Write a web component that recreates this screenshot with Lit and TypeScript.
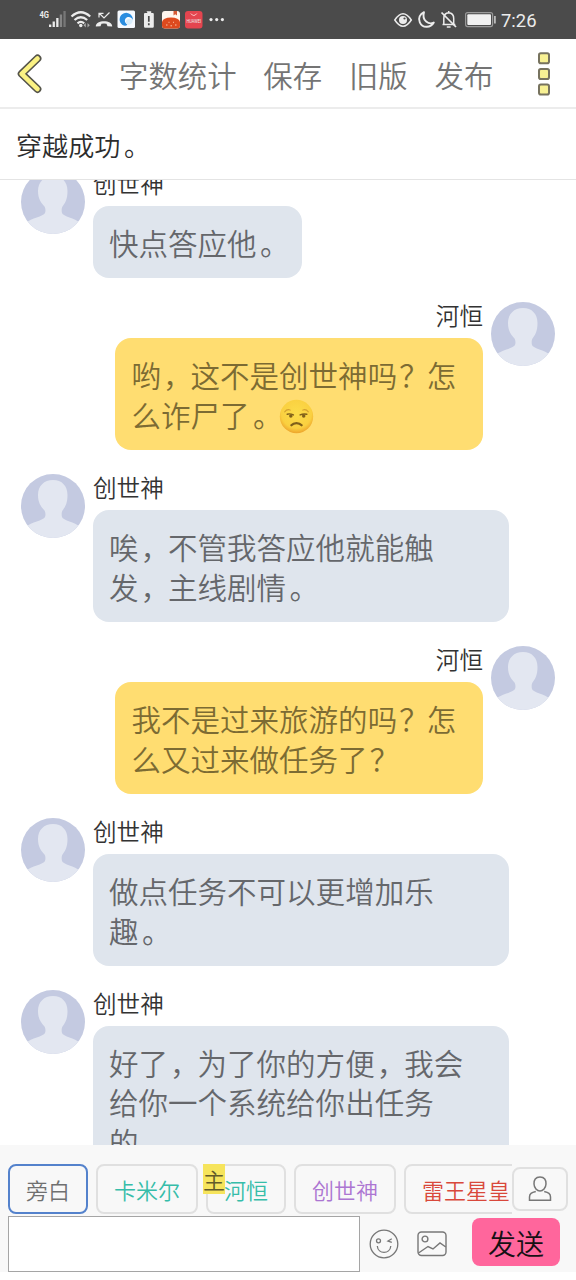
import { LitElement, html, css, svg } from "lit";
import { customElement, property } from "lit/decorators.js";

interface Message {
  name: string;
  mine: boolean;
  lines: string[];
}

interface Role {
  name: string;
  color: string;
  active?: boolean;
  lead?: boolean;
}

const MESSAGES: Message[] = [
  { name: "创世神", mine: false, lines: ["快点答应他。"] },
  { name: "河恒", mine: true, lines: ["哟，这不是创世神吗？怎", "么诈尸了。😒"] },
  { name: "创世神", mine: false, lines: ["唉，不管我答应他就能触", "发，主线剧情。"] },
  { name: "河恒", mine: true, lines: ["我不是过来旅游的吗？怎", "么又过来做任务了？"] },
  { name: "创世神", mine: false, lines: ["做点任务不可以更增加乐", "趣。"] },
  { name: "创世神", mine: false, lines: ["好了，为了你的方便，我会", "给你一个系统给你出任务", "的"] },
];

const ROLES: Role[] = [
  { name: "旁白", color: "#707070", active: true },
  { name: "卡米尔", color: "#36bda9" },
  { name: "河恒", color: "#36bda9", lead: true },
  { name: "创世神", color: "#ac76d2" },
  { name: "雷王星皇", color: "#d9483b" },
];

const unamused = html`<svg class="emoji" viewBox="0 0 34 34">
  <defs>
    <radialGradient id="face" cx=".5" cy=".4" r=".6">
      <stop offset="0" stop-color="#fcdc4a" />
      <stop offset=".75" stop-color="#fad040" />
      <stop offset="1" stop-color="#eda52c" />
    </radialGradient>
  </defs>
  <circle cx="17" cy="17" r="16.200" fill="url(#face)" />
  <g fill="none" stroke="#80601a" stroke-linecap="round">
    <path d="M5.500 12.500C7 10.500 9 9.800 11 10.800M23 10.800C25 9.800 27 10.500 28.500 12.500" stroke="#d3a030" stroke-width="1" />
    <path d="M8 14.800C9.500 14.300 12 14.500 14 15.500M20.500 15.500C22.500 14.500 25 14.300 27 14.800" stroke-width="1.400" />
    <path d="M12 25.500C14.500 22.600 19.500 22.600 22 25.500" stroke-width="2.200" />
  </g>
  <circle cx="11.500" cy="16.400" r="1.700" fill="#80601a" />
  <circle cx="24" cy="16.400" r="1.700" fill="#80601a" />
</svg>`;

function renderLine(line: string) {
  return Array.from(line).map((ch) => {
    if (ch === "😒") return unamused;
    if (ch === "。") return html`<span class="stop">${ch}</span>`;
    if (ch === "，") return html`<span class="comma">${ch}</span>`;
    if (ch === "？") return html`<span class="ask">${ch}</span>`;
    return ch;
  });
}

@customElement("status-bar")
class StatusBar extends LitElement {
  static styles = css`
    :host { display: flex; justify-content: space-between; height: 39px; background: #4b4b4b; }
    svg { display: block; height: 39px; }
    text { font-family: Roboto, sans-serif; fill: #ececec; }
  `;
  render() {
    return html`
      <svg width="240" viewBox="0 0 240 39">
        <text x="39.500" y="18" font-size="9" font-weight="700" textLength="9.500" lengthAdjust="spacingAndGlyphs">4G</text>
        <g fill="#ececec">
          <rect x="49" y="24.500" width="2.300" height="2.500" />
          <rect x="52.600" y="21.500" width="2.300" height="5.500" />
          <rect x="56.200" y="18" width="2.300" height="9" />
          <rect x="59.800" y="14.500" width="2.300" height="12.500" fill="#858585" />
          <rect x="63.400" y="11" width="2.300" height="16" fill="#777" />
        </g>
        <g fill="none" stroke="#ececec" stroke-width="2.200">
          <path d="M71.500 16.500Q80.800 8 90.200 16.500M74.500 20Q80.800 14.500 87.200 20M77.500 23.300Q80.800 20.500 84.200 23.300" />
        </g>
        <circle cx="80.800" cy="25.500" r="1.700" fill="#ececec" />
        <path d="M83.500 25.300l2.300-2.200v4.400zM89.800 25.300l-2.300-2.200v4.400z" fill="#aaa" />
        <path d="M95.800 26.500C95.500 19.500 112.500 19.500 112.200 26.500L107.500 26.300L106.500 23.800Q104 23 101.500 23.800L100.500 26.300Z" fill="#ececec" />
        <path d="M99.500 13.500l4.500 4.500L109.500 12.500M99 17.500v-4.200h4.500" fill="none" stroke="#ececec" stroke-width="1.200" />
        <rect x="117.500" y="10.500" width="17.500" height="17.500" rx="1.500" fill="#f6faff" />
        <path d="M121.500 24A6.600 6.600 0 1 1 132.800 20C131.500 16.500 127.500 16 125.800 18.300C124 20.500 125 23 127.500 24.800C125.500 26.300 123 25.800 121.500 24Z" fill="#2a8de0" />
        <path d="M125.800 22.500c.2-3.800 4-5 7-2.500-.2 3-2.500 5.500-5.300 4.800z" fill="#d8edfb" />
        <path d="M146.500 11.200h4.700v1.800h1.600q1 0 1 1v12.500q0 1.200-1.200 1.200h-7.400q-1.200 0-1.200-1.200V14q0-1 1-1h2.500z" fill="#ececec" />
        <path d="M148.800 16v5.800M148.800 23.300v2" stroke="#4b4b4b" stroke-width="1.700" />
        <rect x="162" y="11" width="18" height="17.500" rx="3" fill="#fff6ef" />
        <path d="M162 22q1-4.500 9-4.500t9 4.500v3.500q0 3-3 3h-12q-3 0-3-3z" fill="#dd4a1e" />
        <path d="M173.500 11h3.500v4.500l-1.800-1.300-1.700 1.300z" fill="#d65a36" />
        <path d="M166 25h1.500M168.500 22.300h1M173 22.300h1M175 25h1.500M170.500 25.800h1.500" stroke="#fbc4a6" />
        <rect x="185" y="11" width="17.500" height="17.500" rx="3" fill="#e4454f" />
        <path d="M190.800 13.500q3 4 6 0" fill="none" stroke="#ffd5d5" stroke-width=".9" />
        <text x="186.500" y="22.800" font-size="4.500" textLength="14.500" lengthAdjust="spacingAndGlyphs">HUAWEI</text>
        <g fill="#ececec"><circle cx="211" cy="19.600" r="1.600" /><circle cx="216.700" cy="19.600" r="1.600" /><circle cx="222.400" cy="19.600" r="1.600" /></g>
      </svg>
      <svg width="186" viewBox="390 0 186 39">
        <g fill="none" stroke="#ececec" stroke-width="1.500">
          <path d="M394.800 20Q403 7.500 411.300 20Q403 32.500 394.800 20Z" />
          <path d="M424 12.200C420 14 417.800 18 419.800 22.300C422.300 28 430.500 28.500 433.800 22.500C429 25 421.500 21 424 12.200Z" stroke-width="1.900" stroke-linejoin="round" />
          <path d="M442.500 24.500h12.800M443.800 24.500v-6q0-5.500 4.900-5.800q5 .3 5 5.800v6M448.700 12.500v-1.500M446.800 27h3.800" />
          <path d="M441.500 12.500l14.500 14.500" stroke-width="1.700" />
        </g>
        <circle cx="403" cy="19.900" r="4" fill="#ececec" />
        <circle cx="404.500" cy="18.500" r="1.100" fill="#4b4b4b" />
        <rect x="465.600" y="12.600" width="27" height="14" rx="2" fill="none" stroke="#999" stroke-width="1.200" />
        <rect x="467.300" y="14.200" width="23.700" height="10.800" rx="1" fill="#f0f0f0" />
        <rect x="494" y="16" width="1.800" height="7.500" fill="#bbb" />
        <text x="501" y="26.500" font-size="19" textLength="35.500" lengthAdjust="spacingAndGlyphs">7:26</text>
      </svg>`;
  }
}

@customElement("nav-header")
class NavHeader extends LitElement {
  static styles = css`
    :host { display: flex; align-items: center; box-sizing: border-box; height: 70px; padding: 0 25px 0 16px; border-bottom: 2px solid #ececec; background: #fff; }
    .back { width: 28px; height: 42px; margin-top: 2px; }
    .links { display: flex; gap: 26.800px; margin: 2px 0 0 75px; font-size: 29.400px; line-height: 40px; font-weight: 350; color: #747474; white-space: nowrap; }
    .more { width: 14px; height: 44px; margin: 2px 0 0 auto; }
    svg { display: block; }
  `;
  render() {
    return html`
      <svg class="back" viewBox="0 0 28 42">
        <path d="M21.500 5.500L5.600 20.800L21.500 36" fill="none" stroke="#55544a" stroke-width="7.800" stroke-linecap="round" stroke-linejoin="round" />
        <path d="M21.500 5.500L5.600 20.800L21.500 36" fill="none" stroke="#fbf283" stroke-width="4.600" stroke-linecap="round" stroke-linejoin="round" />
      </svg>
      <div class="links"><span>字数统计</span><span>保存</span><span>旧版</span><span>发布</span></div>
      <svg class="more" viewBox="0 0 14 44">
        ${[1.2, 17, 32.6].map(
          (y) => svg`<rect x="2" y=${y} width="10" height="10" rx="1.800" fill="#f8f193" stroke="#77735f" stroke-width="2" />`
        )}
      </svg>`;
  }
}

@customElement("chat-message")
class ChatMessage extends LitElement {
  @property({ attribute: false }) message!: Message;
  static styles = css`
    :host { display: block; }
    .row { display: flex; align-items: flex-start; gap: 8px; padding: 0 21px; }
    .mine { flex-direction: row-reverse; }
    .avatar { flex: none; width: 64px; height: 64px; display: block; }
    .body { display: flex; flex-direction: column; align-items: flex-start; }
    .mine .body { align-items: flex-end; }
    .name { height: 36px; line-height: 26px; font-size: 23.600px; color: #333; font-weight: 350; }
    .bubble { box-sizing: border-box; padding: 17px 16px 15.500px; border-radius: 16px; background: #dfe5ed; color: #65676b; font-size: 29.500px; line-height: 39.500px; font-weight: 350; white-space: nowrap; }
    .multi { width: 416px; }
    .mine .bubble { width: 368px; padding-left: 16.500px; background: #ffdd71; color: #7c6b33; }
    .stop { display: inline-block; transform: translateX(3.500px); }
    .comma { display: inline-block; transform: translateX(2px); }
    .ask { display: inline-block; transform: translateX(2px); }
    .emoji { width: 35px; height: 35px; vertical-align: -7px; margin: -4px 0 -4px 0; transform: translateY(-4px); }
    .line { height: 39.700px; }
  `;
  render() {
    const { name, mine, lines } = this.message;
    return html`<div class="row ${mine ? "mine" : ""}">
      <svg class="avatar" viewBox="0 0 64 64">
        <defs><clipPath id="disc"><circle cx="32" cy="32" r="32" /></clipPath></defs>
        <g clip-path="url(#disc)">
          <rect width="64" height="64" fill="#c4cae1" />
          <path d="M32 6C41 6 46.500 12 46.500 21C46.500 29 44.500 32.500 41.500 36.500C40.500 38 40.500 41 41 43C42 46.500 54 48 59 53L59 64H5V53C10 48 22.500 46.500 24 43C24.800 41 24.500 38 23.500 36.500C20 32.500 17 29 17 21C17 12 23 6 32 6Z" fill="#e3e7f1" />
        </g>
      </svg>
      <div class="body">
        <div class="name">${name}</div>
        <div class="bubble ${lines.length > 1 ? "multi" : ""}">
          ${lines.map((l) => html`<div class="line">${renderLine(l)}</div>`)}
        </div>
      </div>
    </div>`;
  }
}

@customElement("chat-composer")
class ChatComposer extends LitElement {
  static styles = css`
    :host { display: block; box-sizing: border-box; height: 127px; padding: 19px 8px 0; background: #f8f8f8; }
    .top { display: flex; align-items: center; height: 50px; }
    .roles { flex: 1; min-width: 0; display: flex; gap: 8px; overflow: hidden; height: 50px; }
    .role { flex: none; position: relative; box-sizing: border-box; height: 50px; padding: 0 16px; border: 2px solid #e0e0e0; border-radius: 8px; font-size: 22px; line-height: 46px; font-weight: 350; white-space: nowrap; }
    .active { border-color: #5482cc; }
    .name { display: block; }
    .lead { position: absolute; left: -5px; top: -2px; width: 22px; height: 30px; background: #f6e45c; color: #625b2a; line-height: 30px; text-align: center; }
    .person { flex: none; box-sizing: border-box; width: 56px; height: 44px; border: 2px solid #e0e0e0; border-radius: 8px; display: grid; place-items: center; }
    .bottom { display: flex; align-items: flex-start; margin-top: 2px; }
    .input { box-sizing: border-box; width: 352px; height: 56px; border: 1px solid #a5a5a5; background: #fff; }
    .smile { margin: 13px 0 0 9px; }
    .picture { margin: 13px 0 0 18px; }
    .send { width: 88px; height: 48px; margin: 2px 0 0 25px; border-radius: 8px; background: #ff669c; color: #161014; font-size: 28px; line-height: 51px; text-align: center; font-weight: 350; }
    svg { display: block; flex: none; }
  `;
  render() {
    return html`
      <div class="top">
        <div class="roles">
          ${ROLES.map(
            (r) => html`<div class="role ${r.active ? "active" : ""}" style="color:${r.color}">
              <span class="name">${r.name}</span>${r.lead ? html`<span class="lead">主</span>` : ""}
            </div>`
          )}
        </div>
        <div class="person">
          <svg width="24" height="28" viewBox="0 0 24 28" fill="none" stroke="#777" stroke-width="1.500">
            <path d="M12 2C7.500 2 5.800 5 6 9C6.200 13 9 16 12 16S17.800 13 18 9C18.200 5 16.500 2 12 2Z" />
            <path d="M7.800 16.500C3.500 17.500 1.500 18.500 1.500 22V25.200H22.500V22C22.500 18.500 20.500 17.500 16.200 16.500" />
          </svg>
        </div>
      </div>
      <div class="bottom">
        <div class="input"></div>
        <svg class="smile" width="30" height="30" viewBox="0 0 30 30" fill="none" stroke="#777" stroke-width="1.300">
          <circle cx="15" cy="15" r="13.800" />
          <circle cx="9.500" cy="11.800" r="2" />
          <path d="M22.800 9.800L19 12L22.800 13.300M8.300 17C9 25.500 21 25.500 21.800 17" />
        </svg>
        <svg class="picture" width="30" height="30" viewBox="0 0 30 30" fill="none" stroke="#777" stroke-width="1.400">
          <rect x="1" y="3" width="28" height="23.500" rx="3.500" />
          <circle cx="8" cy="10" r="2.900" />
          <path d="M1.500 24L11 17.500L16 20L23 14L28.800 18" />
        </svg>
        <div class="send">发送</div>
      </div>`;
  }
}

@customElement("app-root")
class AppRoot extends LitElement {
  static styles = css`
    :host { display: flex; flex-direction: column; height: 1280px; background: #fff; overflow: hidden; font-family: "Noto Sans CJK SC", sans-serif; }
    .narration { box-sizing: border-box; height: 71px; padding: 16px 16px 0; border-bottom: 1px solid #e4e4e4; font-size: 26.100px; line-height: 40px; font-weight: 350; color: #2c2c2c; }
    .stop { display: inline-block; transform: translateX(3.500px); }
    .chat { height: 965px; overflow: hidden; }
    .list { display: flex; flex-direction: column; gap: 24px; margin-top: -10px; }
  `;
  render() {
    return html`
      <status-bar></status-bar>
      <nav-header></nav-header>
      <div class="narration">穿越成功<span class="stop">。</span></div>
      <div class="chat">
        <div class="list">${MESSAGES.map((m) => html`<chat-message .message=${m}></chat-message>`)}</div>
      </div>
      <chat-composer></chat-composer>`;
  }
}
